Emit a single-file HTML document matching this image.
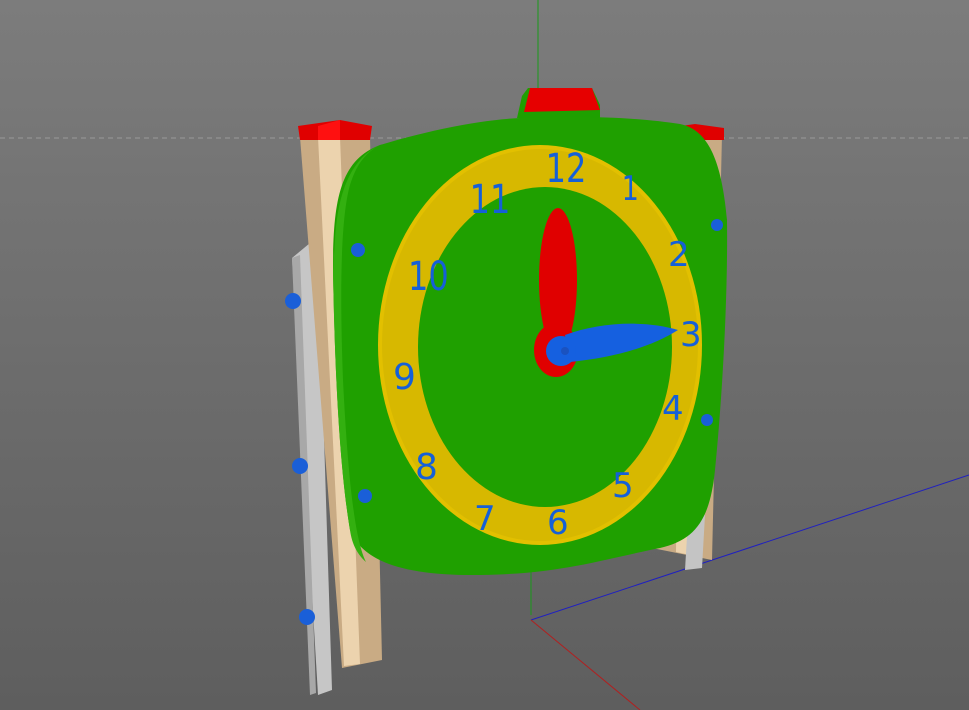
<!DOCTYPE html>
<html><head><style>
html,body{margin:0;padding:0;width:969px;height:710px;overflow:hidden;background:#6e6e6e}
svg{display:block}
text{font-family:"DejaVu Sans","Liberation Sans",sans-serif;fill:#1560d8}
</style></head><body>
<svg width="969" height="710" viewBox="0 0 969 710" xmlns="http://www.w3.org/2000/svg">
<defs>
<linearGradient id="bg" x1="0" y1="0" x2="0" y2="1">
<stop offset="0" stop-color="#7c7c7c"/><stop offset="1" stop-color="#5e5e5e"/>
</linearGradient>
</defs>
<rect width="969" height="710" fill="url(#bg)"/>
<line x1="0" y1="138" x2="969" y2="138" stroke="#9a9a9a" stroke-dasharray="5,4" stroke-width="1"/>
<line x1="538" y1="0" x2="538" y2="90" stroke="#1a9a1a" stroke-width="1"/>
<line x1="531" y1="620" x2="969" y2="475" stroke="#2020c0" stroke-width="1"/>
<line x1="531" y1="620" x2="640" y2="710" stroke="#b02020" stroke-width="1"/>
<line x1="531" y1="570" x2="531" y2="615" stroke="#1a9a1a" stroke-width="1"/>
<polygon points="667,135 722,135 712,560 652,548" fill="#c9ab84"/>
<polygon points="680,135 696,135 690,555 676,552" fill="#ecd3ae"/>
<polygon points="688,520 705,515 702,568 685,570" fill="#c4c4c4"/>
<path d="M667,128 L695,124 L724,128 L724,140 L667,140 Z" fill="#e00000"/>
<polygon points="292,258 310,243 318,248 332,690 318,695" fill="#c6c6c6"/>
<polygon points="292,258 300,255 316,693 310,695" fill="#a8a8a8"/>
<polygon points="300,137 370,137 382,660 342,668" fill="#c9ab84"/>
<polygon points="318,137 340,137 360,664 344,666" fill="#ecd3ae"/>
<path d="M298,126 L340,120 L372,126 L370,140 L300,140 Z" fill="#e00000"/>
<path d="M318,126 L340,120 L340,140 L318,140 Z" fill="#ff1010"/>
<ellipse cx="293" cy="301" rx="8" ry="8" fill="#1a5fd8"/>
<ellipse cx="300" cy="466" rx="8" ry="8" fill="#1a5fd8"/>
<ellipse cx="307" cy="617" rx="8" ry="8" fill="#1a5fd8"/>
<path d="M517,118 L522,96 L528,88 L592,88 L600,105 L600,118 Z" fill="#1ea000"/>
<path d="M524,112 L530,88 L592,88 L600,110 Z" fill="#e60000"/>
<path d="M380,145 C430,130 480,120 520,118 C590,115 640,118 680,124 C710,130 722,165 727,220 C728,300 722,400 715,470 C710,520 695,540 660,548 C600,560 560,574 480,575 C400,576 362,560 350,530 C340,470 335,380 333,270 C333,200 340,160 380,145 Z" fill="#1fa000"/>
<path d="M380,145 C352,158 338,190 335,240 L333,270 C335,380 340,470 350,530 C352,545 358,555 366,562 C355,540 348,480 343,380 C340,300 340,220 350,185 C356,165 366,152 380,145 Z" fill="#33b010"/>
<ellipse cx="540" cy="345" rx="162" ry="200" fill="#e2c000"/>
<ellipse cx="540" cy="345" rx="158" ry="196" fill="#d7b800"/>
<ellipse cx="545" cy="347" rx="127" ry="160" fill="#1fa000"/>
<circle cx="358" cy="250" r="7" fill="#1a5fd8"/>
<circle cx="365" cy="496" r="7" fill="#1a5fd8"/>
<circle cx="717" cy="225" r="6" fill="#1a5fd8"/>
<circle cx="707" cy="420" r="6" fill="#1a5fd8"/>
<text x="546" y="182" font-size="40" transform="scale(0.8,1) translate(136,0)">12</text>
<text x="622" y="200" font-size="34" transform="scale(0.8,1) translate(155,0)">1</text>
<text x="668" y="266" font-size="34">2</text>
<text x="680" y="346" font-size="34">3</text>
<text x="662" y="420" font-size="34">4</text>
<text x="612" y="497" font-size="34">5</text>
<text x="547" y="534" font-size="34">6</text>
<text x="474" y="530" font-size="34">7</text>
<text x="415" y="479" font-size="36">8</text>
<text x="393" y="389" font-size="36">9</text>
<text x="408" y="290" font-size="40" transform="scale(0.8,1) translate(102,0)">10</text>
<text x="470" y="213" font-size="40" transform="scale(0.8,1) translate(117,0)">11</text>
<ellipse cx="558" cy="280" rx="19" ry="72" fill="#e00000"/>
<ellipse cx="556" cy="350" rx="22" ry="27" fill="#e00000"/>
<path d="M565,335 C600,322 645,320 678,330 C650,348 610,358 570,362 Z" fill="#1560e0"/>
<circle cx="561" cy="351" r="15" fill="#1560e0"/>
<circle cx="565" cy="351" r="4" fill="#1a52c0"/>
</svg>
</body></html>
